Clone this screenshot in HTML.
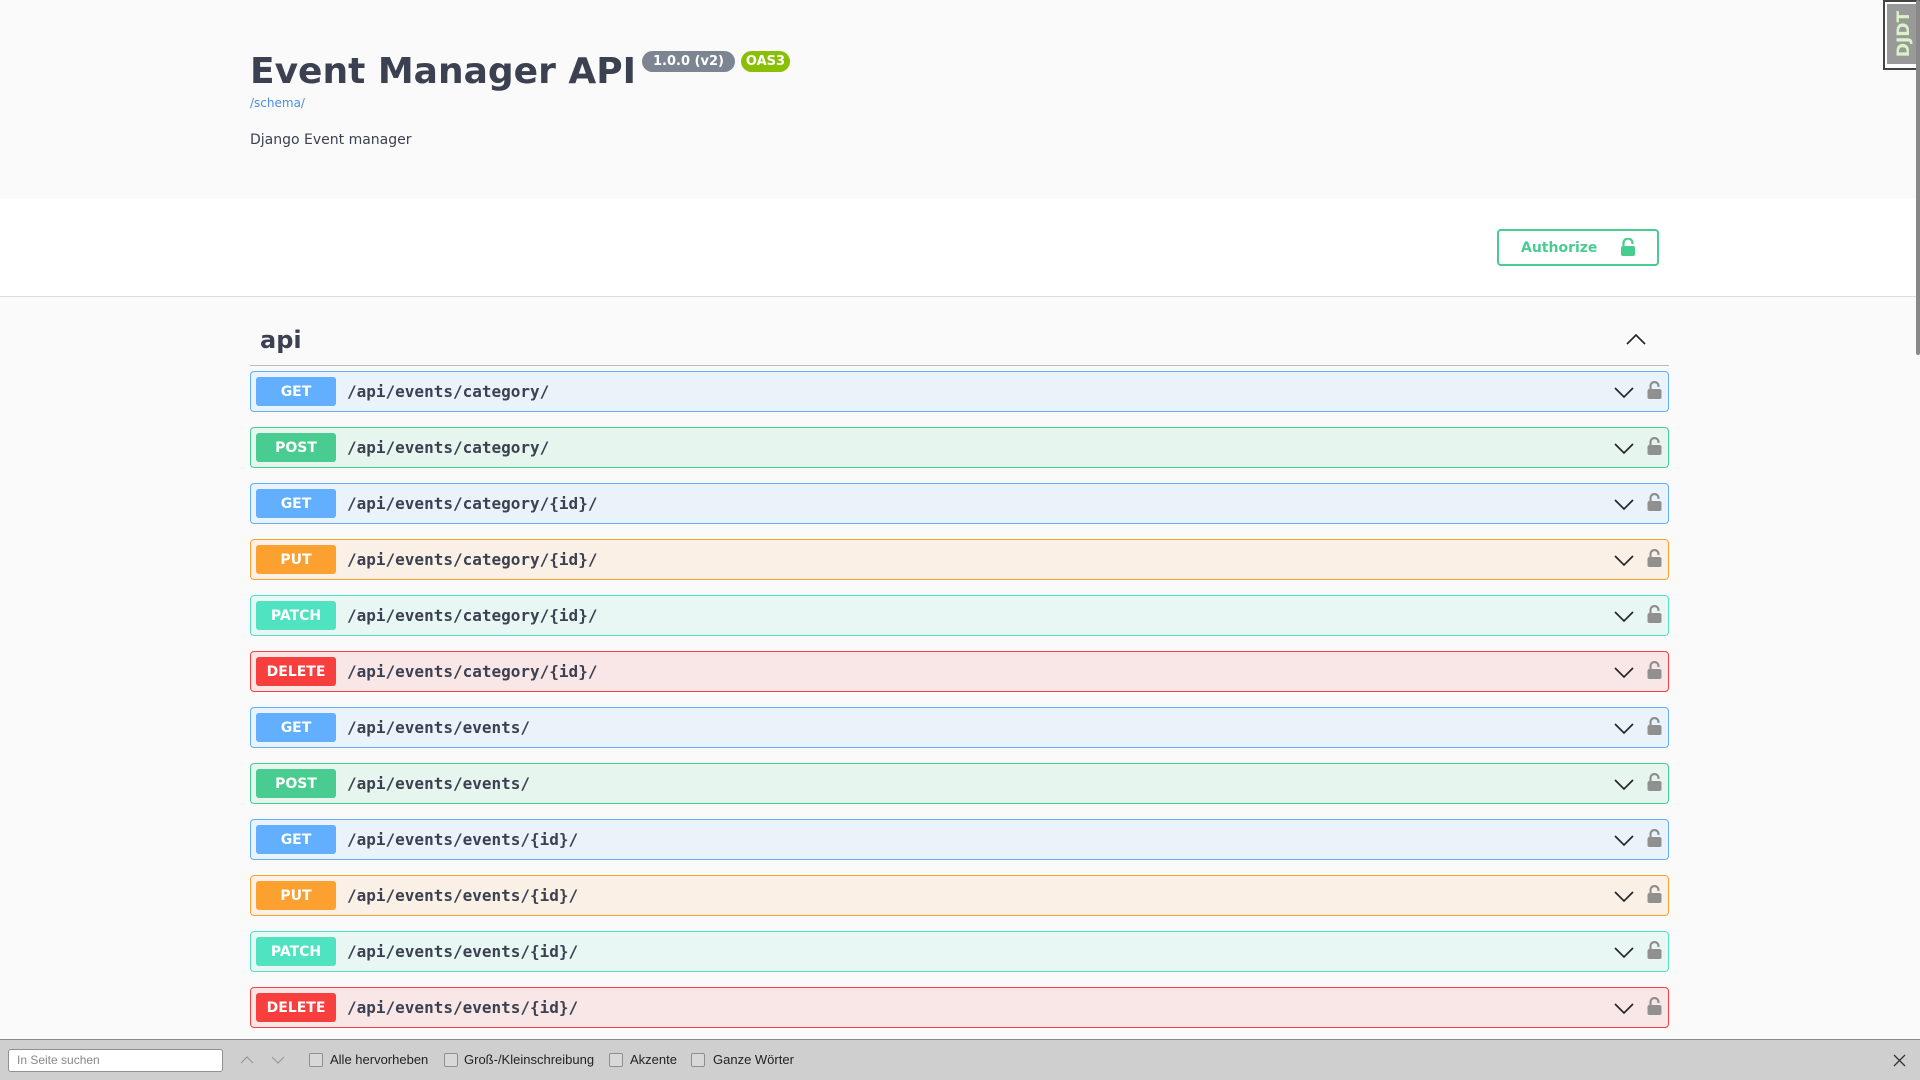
<!DOCTYPE html>
<html><head><meta charset="utf-8"><style>
*{box-sizing:border-box;margin:0;padding:0}
body{width:1920px;height:1080px;overflow:hidden;background:#fafafa;font-family:"DejaVu Sans","Liberation Sans",sans-serif;color:#3b4151;position:relative}
.abs{position:absolute}
.title{left:250px;top:51px;font-size:36px;font-weight:bold;color:#3b4151;white-space:nowrap}
.badge{top:51px;height:21px;border-radius:11px;color:#fff;font-size:13px;font-weight:bold;line-height:22px;text-align:center}
.white{left:0;top:199px;width:1916px;height:98px;background:#fff;border-bottom:1px solid #ddd}
.auth{left:1497px;top:229px;width:162px;height:37px;border:2px solid #49cc90;border-radius:4px;color:#49cc90;font-weight:bold;font-size:14px;line-height:35px;padding-left:22px;background:#fff}
.row{left:250px;width:1419px;height:41px;border:1px solid;border-radius:4px}
.m{position:absolute;left:5px;top:5px;width:80px;height:29px;border-radius:3px;color:#fff;font-weight:bold;font-size:14px;line-height:31px;text-align:center}
.p{position:absolute;left:96px;top:0;line-height:40px;font-family:"DejaVu Sans Mono","Liberation Mono",monospace;font-weight:bold;font-size:16px;color:#3b4151}
.chev{position:absolute;left:1363px;top:15px}
.lock{position:absolute;left:1396px;top:9px}
.find{left:0;top:1039px;width:1920px;height:41px;background:#cfcfcf;border-top:1px solid #8a8a8a;font-family:"Liberation Sans",sans-serif;font-size:13px;color:#222}
.cb{position:absolute;top:13px;width:14px;height:14px;border:1px solid #8f8f8f;border-radius:2px;background:#d8d8d8}
.lbl{position:absolute;top:12px}
</style></head><body>
<div class="abs title">Event Manager API</div>
<div class="abs badge" style="left:642px;width:93px;background:#7d8492">1.0.0 (v2)</div>
<div class="abs badge" style="left:741px;width:49px;background:#89bf04">OAS3</div>
<div class="abs" style="left:250px;top:96px;font-size:12px;color:#4990e2">/schema/</div>
<div class="abs" style="left:250px;top:132px;font-size:14px">Django Event manager</div>
<div class="abs white"></div>
<div class="abs auth">Authorize<svg class="abs" style="left:121px;top:7px" width="16" height="19" viewBox="0 0 16 19"><path d="M3.5 8V5a4.5 4.5 0 0 1 9 0v1" fill="none" stroke="#49cc90" stroke-width="2.2"/><rect x="1" y="8" width="14" height="10" rx="2" fill="#49cc90"/></svg></div>
<div class="abs" style="left:260px;top:326px;font-size:24px;font-weight:bold">api</div>
<svg class="abs" style="left:1626px;top:333px" width="20" height="12" viewBox="0 0 20 12"><path d="M1 11L10 2l9 9" fill="none" stroke="#222" stroke-width="1.6"/></svg>
<div class="abs" style="left:250px;top:365px;width:1419px;height:1px;background:#bbb"></div>

<div id="rows"></div>
<script>
var C={GET:['#61affe','rgba(97,175,254,.1)'],POST:['#49cc90','rgba(73,204,144,.1)'],PUT:['#fca130','rgba(252,161,48,.1)'],PATCH:['#50e3c2','rgba(80,227,194,.1)'],DELETE:['#f93e3e','rgba(249,62,62,.1)']};
var R=[['GET','/api/events/category/'],['POST','/api/events/category/'],['GET','/api/events/category/{id}/'],['PUT','/api/events/category/{id}/'],['PATCH','/api/events/category/{id}/'],['DELETE','/api/events/category/{id}/'],['GET','/api/events/events/'],['POST','/api/events/events/'],['GET','/api/events/events/{id}/'],['PUT','/api/events/events/{id}/'],['PATCH','/api/events/events/{id}/'],['DELETE','/api/events/events/{id}/']];
var h='';R.forEach(function(r,i){var c=C[r[0]];h+='<div class="abs row" style="top:'+(371+i*56)+'px;border-color:'+c[0]+';background:'+c[1]+'"><div class="m" style="background:'+c[0]+'">'+r[0]+'</div><div class="p">'+r[1]+'</div><svg class="chev" width="20" height="12" viewBox="0 0 20 12"><path d="M1 1l9 9 9-9" fill="none" stroke="#222" stroke-width="1.6"/></svg><svg class="lock" width="15" height="19" viewBox="0 0 15 19"><path d="M3.5 9V5a4 4 0 0 1 8 0v1" fill="none" stroke="#909090" stroke-width="2.2"/><rect x="0.5" y="8" width="14" height="10" rx="2" fill="#909090"/></svg></div>'});
document.getElementById('rows').innerHTML=h;
</script>

<div class="abs" style="left:1883px;top:0;width:37px;height:70px;border:2px solid #444;border-right:none;background:#fff"></div>
<div class="abs" style="left:1887px;top:4px;width:33px;height:60px;background:#999"></div>
<div class="abs" style="left:1892px;top:60px;width:52px;transform:rotate(-90deg);transform-origin:0 0;font-size:17px;font-weight:bold;color:#d9f2c6;white-space:nowrap;line-height:24px;text-align:center">DJDT</div>
<div class="abs" style="left:1916px;top:0;width:4px;height:355px;background:#888;border-radius:2px"></div>

<div class="abs find">
<div class="abs" style="left:8px;top:9px;width:215px;height:23px;background:#fff;border:1px solid #8f8f8f;border-radius:3px;color:#888;padding-left:8px;line-height:21px;font-size:12px">In Seite suchen</div>
<svg class="abs" style="left:240px;top:16px" width="14" height="8"><path d="M1 7l6-6 6 6" fill="none" stroke="#999" stroke-width="1.2"/></svg>
<svg class="abs" style="left:271px;top:16px" width="14" height="8"><path d="M1 1l6 6 6-6" fill="none" stroke="#999" stroke-width="1.2"/></svg>
<div class="cb" style="left:309px"></div><div class="lbl" style="left:330px">Alle hervorheben</div>
<div class="cb" style="left:444px"></div><div class="lbl" style="left:464px">Groß-/Kleinschreibung</div>
<div class="cb" style="left:609px"></div><div class="lbl" style="left:630px">Akzente</div>
<div class="cb" style="left:691px"></div><div class="lbl" style="left:713px">Ganze Wörter</div>
<svg class="abs" style="left:1893px;top:14px" width="13" height="13"><path d="M1 1l11 11M12 1L1 12" stroke="#333" stroke-width="1.3"/></svg>
</div>
</body></html>
